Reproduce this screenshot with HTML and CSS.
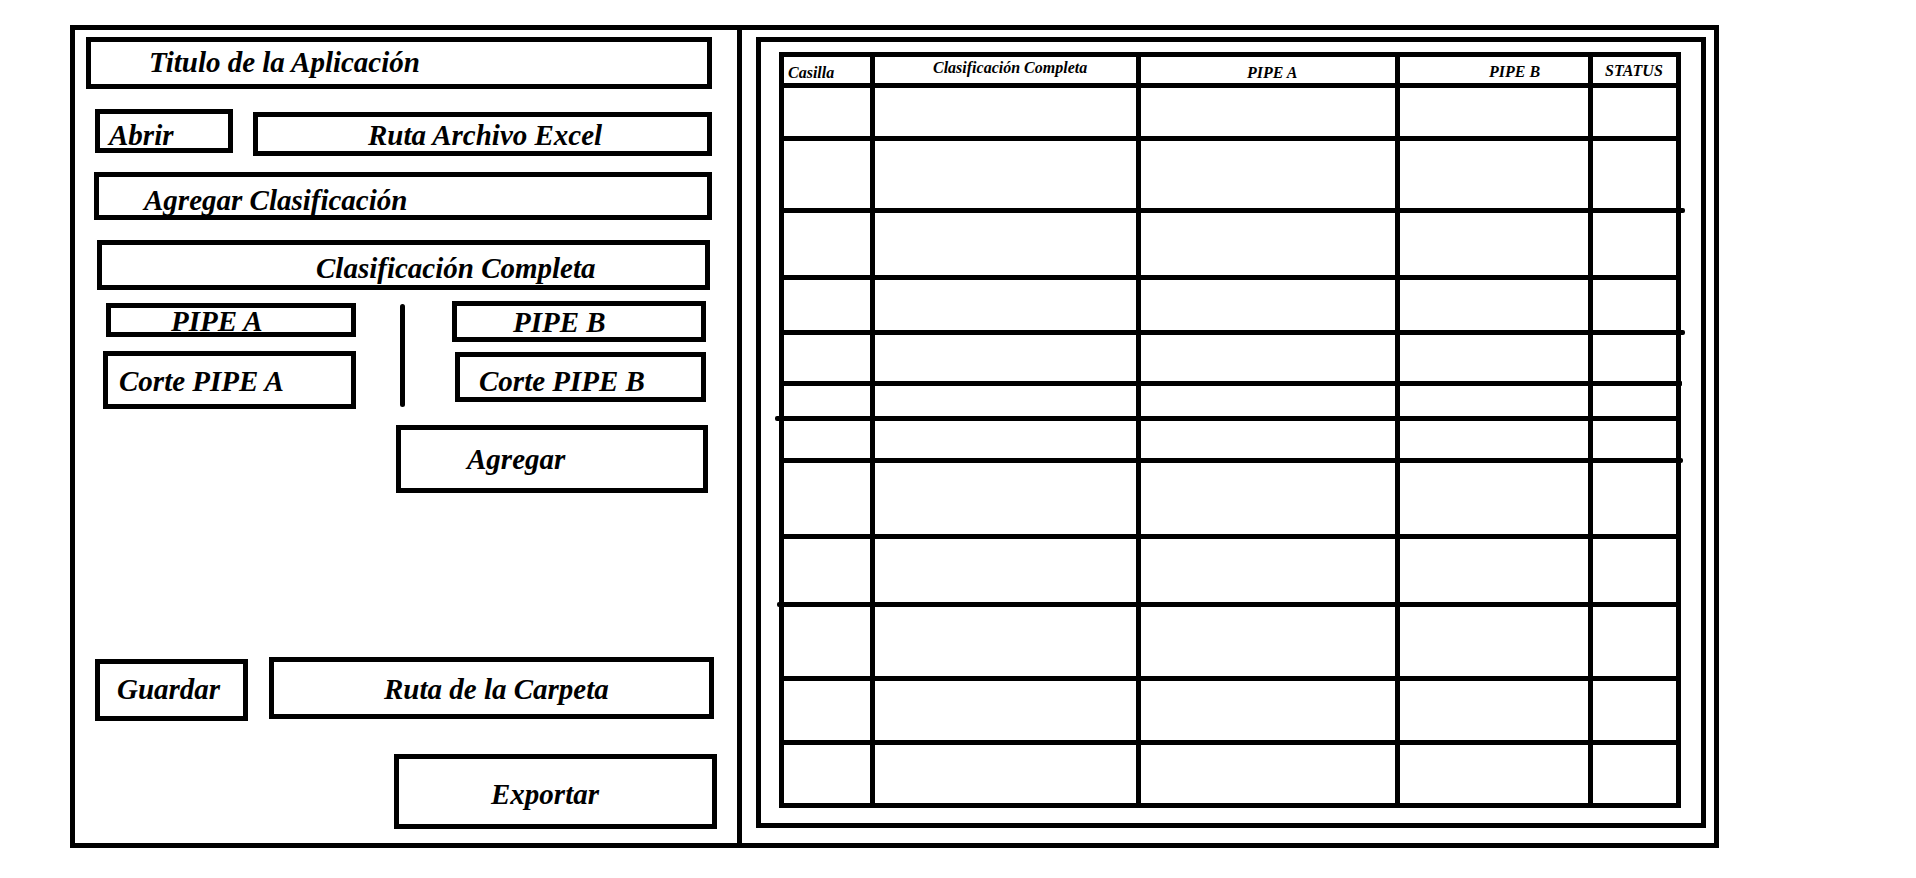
FILE: index.html
```html
<!DOCTYPE html>
<html lang="es">
<head>
<meta charset="utf-8">
<title>Wireframe</title>
<link rel="stylesheet" href="styles.css">
</head>
<body>
<div class="frame">
  <div class="left">
    <div class="box title">Titulo de la Aplicación</div>
    <div class="row row-open">
      <div class="box abrir">Abrir</div>
      <div class="box ruta-excel">Ruta Archivo Excel</div>
    </div>
    <div class="box agregar-clas">Agregar Clasificación</div>
    <div class="box clas-completa">Clasificación Completa</div>
    <div class="pipes">
      <div class="pipe-col pipe-col-a">
        <div class="box pipe-a">PIPE A</div>
        <div class="box corte-a">Corte PIPE A</div>
      </div>
      <div class="sep"></div>
      <div class="pipe-col pipe-col-b">
        <div class="box pipe-b">PIPE B</div>
        <div class="box corte-b">Corte PIPE B</div>
      </div>
    </div>
    <div class="box agregar">Agregar</div>
    <div class="row row-save">
      <div class="box guardar">Guardar</div>
      <div class="box ruta-carpeta">Ruta de la Carpeta</div>
    </div>
    <div class="box exportar">Exportar</div>
  </div>
  <div class="right">
    <div class="inner">
      <div class="grid">
        <div class="cell th th-casilla">Casilla</div>
        <div class="cell th th-clas">Clasificación Completa</div>
        <div class="cell th th-pa">PIPE A</div>
        <div class="cell th th-pb">PIPE B</div>
        <div class="cell th th-status">STATUS</div>

        <div class="cell"></div><div class="cell"></div><div class="cell"></div><div class="cell"></div><div class="cell"></div>
        <div class="cell"></div><div class="cell"></div><div class="cell"></div><div class="cell"></div><div class="cell nub-r"></div>
        <div class="cell"></div><div class="cell"></div><div class="cell"></div><div class="cell"></div><div class="cell"></div>
        <div class="cell"></div><div class="cell"></div><div class="cell"></div><div class="cell"></div><div class="cell nub-r"></div>
        <div class="cell"></div><div class="cell"></div><div class="cell"></div><div class="cell"></div><div class="cell nub-r tiny"></div>
        <div class="cell nub-l"></div><div class="cell"></div><div class="cell"></div><div class="cell"></div><div class="cell"></div>
        <div class="cell"></div><div class="cell"></div><div class="cell"></div><div class="cell"></div><div class="cell nub-r short"></div>
        <div class="cell"></div><div class="cell"></div><div class="cell"></div><div class="cell"></div><div class="cell"></div>
        <div class="cell nub-l short"></div><div class="cell"></div><div class="cell"></div><div class="cell"></div><div class="cell"></div>
        <div class="cell"></div><div class="cell"></div><div class="cell"></div><div class="cell"></div><div class="cell"></div>
        <div class="cell"></div><div class="cell"></div><div class="cell"></div><div class="cell"></div><div class="cell"></div>
        <div class="cell"></div><div class="cell"></div><div class="cell"></div><div class="cell"></div><div class="cell"></div>
      </div>
    </div>
  </div>
</div>
</body>
</html>
```

FILE: styles.css
```css
html, body {
  margin: 0;
  padding: 0;
  background: #fff;
}

body {
  font-family: "Liberation Serif", "Times New Roman", serif;
  font-weight: bold;
  font-style: italic;
  color: #000;
}

.frame {
  margin: 25px 0 0 70px;
  width: 1649px;
  height: 823px;
  border: 5px solid #000;
  box-sizing: border-box;
  display: flex;
}

/* ---------- left panel ---------- */
.left {
  flex: none;
  width: 667px;
  border-right: 5px solid #000;
  box-sizing: border-box;
  display: flex;
  flex-direction: column;
  align-items: flex-start;
}

.row {
  display: flex;
  align-items: flex-start;
}

.box {
  flex: none;
  border: 5px solid #000;
  box-sizing: border-box;
  font-size: 29px;
  line-height: 20px;
  white-space: nowrap;
}

.title {
  margin: 7px 0 0 11px;
  width: 626px;
  height: 52px;
  padding: 10px 0 0 58px;
}

.row-open { margin-top: 20px; }

.abrir {
  margin-left: 20px;
  width: 138px;
  height: 44px;
  padding: 11px 0 0 9px;
}

.ruta-excel {
  margin: 3px 0 0 20px;
  width: 459px;
  height: 44px;
  padding: 8px 0 0 110px;
}

.agregar-clas {
  margin: 16px 0 0 19px;
  width: 618px;
  height: 48px;
  padding: 13px 0 0 45px;
}

.clas-completa {
  margin: 20px 0 0 22px;
  width: 613px;
  height: 50px;
  padding: 13px 0 0 214px;
}

.pipes {
  display: flex;
  align-items: flex-start;
  margin-top: 11px;
}

.pipe-col {
  flex: none;
  display: flex;
  flex-direction: column;
  align-items: flex-start;
}

.pipe-col-a { width: 325px; }

.pipe-a {
  margin: 2px 0 0 31px;
  width: 250px;
  height: 34px;
  padding: 3px 0 0 60px;
}

.corte-a {
  margin: 14px 0 0 28px;
  width: 253px;
  height: 58px;
  padding: 15px 0 0 11px;
}

.sep {
  flex: none;
  width: 5px;
  height: 103px;
  margin-top: 3px;
  border-radius: 3px;
  background: #000;
}

.pipe-b {
  margin-left: 47px;
  width: 254px;
  height: 41px;
  padding: 6px 0 0 56px;
}

.corte-b {
  margin: 10px 0 0 50px;
  width: 251px;
  height: 50px;
  padding: 14px 0 0 19px;
}

.agregar {
  margin: 16px 0 0 321px;
  width: 312px;
  height: 68px;
  padding: 19px 0 0 66px;
}

.row-save { margin-top: 164px; }

.guardar {
  margin: 2px 0 0 20px;
  width: 153px;
  height: 62px;
  padding: 15px 0 0 17px;
}

.ruta-carpeta {
  margin-left: 21px;
  width: 445px;
  height: 62px;
  padding: 17px 0 0 110px;
}

.exportar {
  margin: 33px 0 0 319px;
  width: 323px;
  height: 75px;
  padding: 25px 0 0 92px;
}

/* ---------- right panel ---------- */
.right {
  flex: none;
  width: 972px;
}

.inner {
  margin: 7px 0 0 14px;
  width: 950px;
  height: 791px;
  border: 5px solid #000;
  box-sizing: border-box;
}

.grid {
  margin: 10px 0 0 18px;
  width: 902px;
  height: 756px;
  box-sizing: border-box;
  padding: 5px;
  gap: 5px;
  background: #000;
  display: grid;
  grid-template-columns: 86px 261px 254px 188px 83px;
  grid-template-rows: 26px 48px 67px 62px 50px 46px 30px 37px 71px 63px 69px 59px 58px;
}

.cell {
  background: #fff;
  position: relative;
}

.th {
  font-size: 16px;
  line-height: 16px;
  white-space: nowrap;
}

.th-casilla { padding: 8px 0 0 4px; }
.th-clas { padding: 3px 0 0 58px; }
.th-pa { padding: 8px 0 0 106px; }
.th-pb { padding: 7px 0 0 89px; }
.th-status { padding: 6px 0 0 12px; }

/* little stroke overshoots of the hand-drawn lines */
.nub-r::after,
.nub-l::after {
  content: "";
  position: absolute;
  bottom: -5px;
  height: 5px;
  background: #000;
}

.nub-r::after {
  right: -9px;
  width: 4px;
  border-radius: 0 2px 2px 0;
}

.nub-r.short::after { right: -7px; width: 2px; }
.nub-r.tiny::after { right: -6px; width: 1px; }

.nub-l::after {
  left: -9px;
  width: 4px;
  border-radius: 2px 0 0 2px;
}

.nub-l.short::after { left: -7px; width: 2px; }
```
